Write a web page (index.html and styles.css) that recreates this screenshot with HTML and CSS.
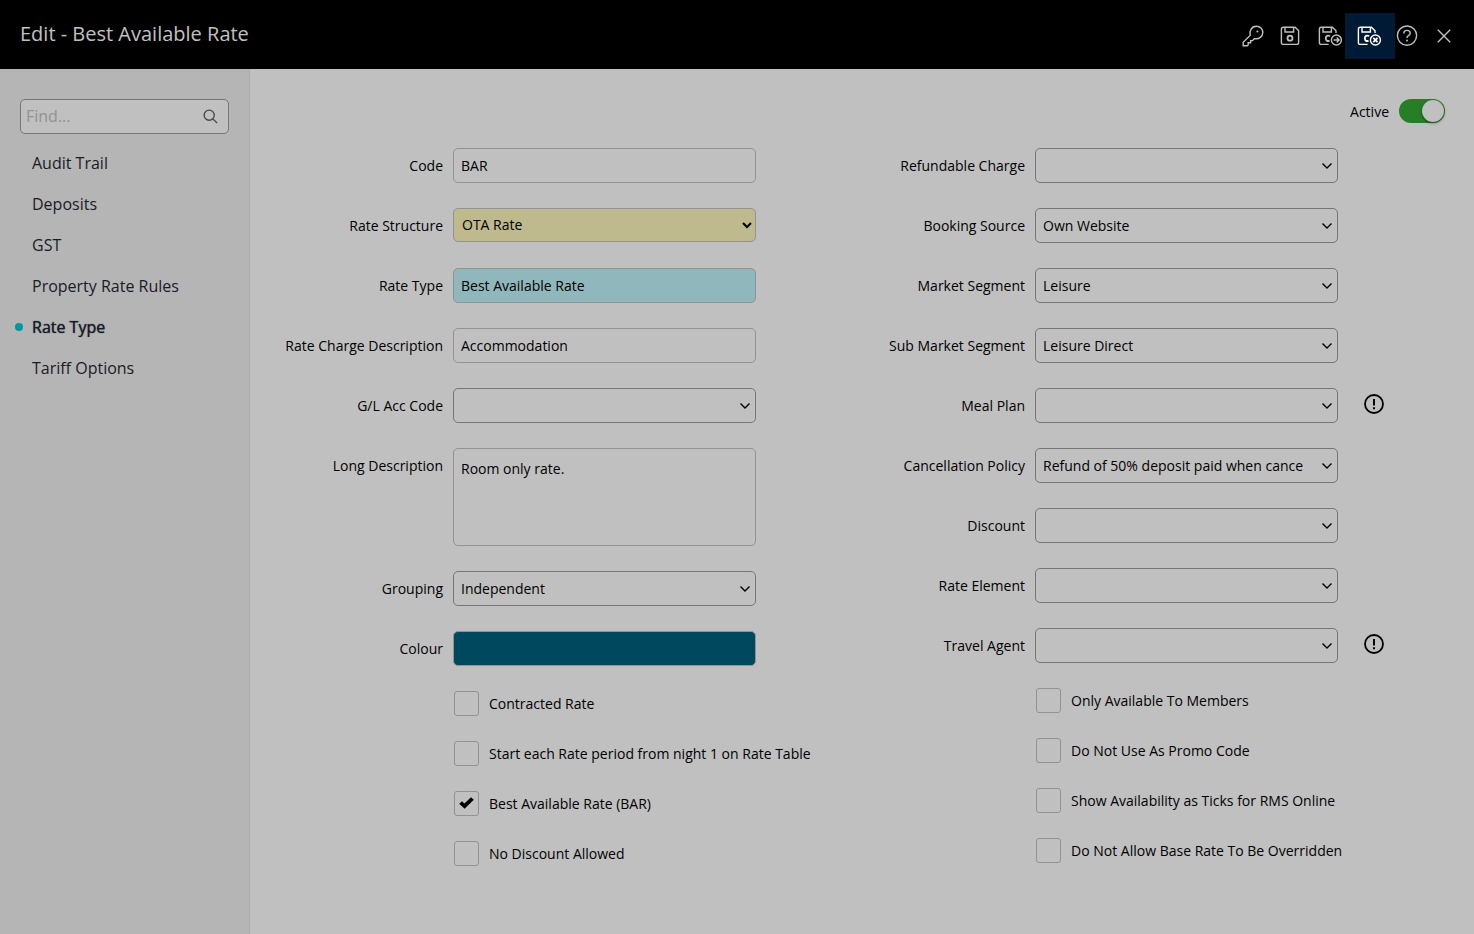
FILE: index.html
```
<!DOCTYPE html>
<html lang="en">
<head>
  <meta charset="UTF-8">
  <meta name="viewport" content="width=device-width, initial-scale=1.0">
  <title>Edit - Best Available Rate</title>
  <link rel="stylesheet" href="styles.css">
</head>
<body>

  <!-- shared icons -->
  <svg class="sprite" aria-hidden="true">
    <symbol id="chevron" viewBox="0 0 12 8">
      <path d="M1.5 1.5 L6 6 L10.5 1.5" fill="none" stroke="currentColor" stroke-width="1.4"/>
    </symbol>
    <symbol id="alert" viewBox="0 0 20 20">
      <circle cx="10" cy="10" r="9" fill="none" stroke="currentColor" stroke-width="1.8"/>
      <path d="M10 5 V11.5 M10 13.2 V15.2" fill="none" stroke="currentColor" stroke-width="2"/>
    </symbol>
    <symbol id="tick" viewBox="0 0 15 12">
      <path d="M0.2 6.8 L3 4.2 L5.4 6.4 L12 0.2 L14.8 2.8 L5.6 11.8 Z" fill="currentColor"/>
    </symbol>
  </svg>

  <header class="topbar">
    <h1>Edit - Best Available Rate</h1>
    <div class="actions">
      <button type="button" class="narrow" aria-label="Security">
        <svg width="22" height="22" viewBox="0 0 22 22">
          <path d="M8.2 10.4 C6.8 6.2 9.6 1.3 14.4 1.3 C18 1.3 20.8 4 20.8 7.5 C20.8 11.5 17 14.6 12.4 13.6 L10.6 15.6 H8.6 V17.8 H6.2 V20 L5.2 20.8 H1.2 V17.2 Z"/>
          <circle cx="15.4" cy="6.6" r="1" class="solid"/>
        </svg>
      </button>
      <button type="button" class="wide" aria-label="Save">
        <svg width="22" height="22" viewBox="0 0 22 22">
          <path d="M4.4 2.2 H16 L19.6 5.6 V17.4 Q19.6 19.4 17.6 19.4 H4.4 Q2.4 19.4 2.4 17.4 V4.2 Q2.4 2.2 4.4 2.2 Z"/>
          <path d="M6 2.4 V7 H14.6 V2.4"/>
          <circle cx="11" cy="13.2" r="2.5" class="thick"/>
        </svg>
      </button>
      <button type="button" class="medium" aria-label="Save and continue">
        <svg width="26" height="22" viewBox="0 0 26 22">
          <path d="M11.6 19.4 H4.4 Q2.4 19.4 2.4 17.4 V4.2 Q2.4 2.2 4.4 2.2 H15.4 L19 5.8 V8"/>
          <path d="M6 2.4 V7 H14.4 V2.4"/>
          <path d="M13.2 11 Q9 9.6 8.8 13.2 Q9 16.8 12.6 15.8" class="thick"/>
          <circle cx="19.4" cy="15" r="5"/>
          <path d="M16.6 15 H22 M19.7 12.6 L22.1 15 L19.7 17.4"/>
        </svg>
      </button>
      <button type="button" class="wide current" aria-label="Save and exit">
        <svg width="26" height="22" viewBox="1 0 26 22">
          <path d="M11.6 19.4 H4.4 Q2.4 19.4 2.4 17.4 V4.2 Q2.4 2.2 4.4 2.2 H15.4 L19 5.8 V8"/>
          <path d="M6 2.4 V7 H14.4 V2.4"/>
          <path d="M13.2 11 Q9 9.6 8.8 13.2 Q9 16.8 12.6 15.8" class="thick"/>
          <circle cx="19.4" cy="15" r="5"/>
          <path d="M17.3 12.9 L21.5 17.1 M21.5 12.9 L17.3 17.1" class="thick"/>
        </svg>
      </button>
      <button type="button" class="narrow" aria-label="Help">
        <svg width="22" height="22" viewBox="0 0 22 22">
          <circle cx="11" cy="10.6" r="9.6"/>
          <path d="M7.8 8.4 Q7.9 5.4 11 5.4 Q14.2 5.4 14.2 8.2 Q14.2 9.6 12.4 10.6 Q11 11.4 11 13"/>
          <circle cx="11" cy="15.4" r="1" class="solid"/>
        </svg>
      </button>
      <button type="button" class="wide" aria-label="Close">
        <svg width="14" height="14" viewBox="0 0 14 14">
          <path d="M0.8 0.8 L13.2 13.2 M13.2 0.8 L0.8 13.2"/>
        </svg>
      </button>
    </div>
  </header>

  <div class="page">
    <aside class="sidebar">
      <div class="search">
        <input type="text" placeholder="Find..." aria-label="Find">
        <svg width="15" height="15" viewBox="0 0 16 16">
          <circle cx="6.6" cy="6.6" r="5.4"/>
          <path d="M10.5 10.5 L15 15"/>
        </svg>
      </div>
      <nav>
        <a href="#">Audit Trail</a>
        <a href="#">Deposits</a>
        <a href="#">GST</a>
        <a href="#">Property Rate Rules</a>
        <a href="#" class="selected">Rate Type</a>
        <a href="#">Tariff Options</a>
      </nav>
    </aside>

    <main>
      <div class="active-row">
        <label for="active">Active</label>
        <input type="checkbox" id="active" class="toggle" checked>
      </div>

      <form class="columns">
        <div class="column">
          <div class="row">
            <label for="code">Code</label>
            <input type="text" id="code" value="BAR">
          </div>
          <div class="row">
            <label for="structure">Rate Structure</label>
            <select id="structure" class="structure"><option>OTA Rate</option></select>
          </div>
          <div class="row">
            <label for="rateType">Rate Type</label>
            <input type="text" id="rateType" class="required" value="Best Available Rate">
          </div>
          <div class="row">
            <label for="charge">Rate Charge Description</label>
            <input type="text" id="charge" value="Accommodation">
          </div>
          <div class="row">
            <label for="glCode">G/L Acc Code</label>
            <div class="dropdown">
              <select id="glCode"><option></option></select>
              <svg><use href="#chevron"/></svg>
            </div>
          </div>
          <div class="row">
            <label for="longDesc">Long Description</label>
            <textarea id="longDesc">Room only rate.</textarea>
          </div>
          <div class="row">
            <label for="grouping">Grouping</label>
            <div class="dropdown">
              <select id="grouping"><option>Independent</option></select>
              <svg><use href="#chevron"/></svg>
            </div>
          </div>
          <div class="row">
            <label for="colour">Colour</label>
            <button type="button" id="colour" class="swatch"></button>
          </div>
          <div class="check">
            <input type="checkbox" id="contracted">
            <label for="contracted">Contracted Rate</label>
          </div>
          <div class="check">
            <input type="checkbox" id="night">
            <label for="night">Start each Rate period from night 1 on Rate Table</label>
          </div>
          <div class="check">
            <input type="checkbox" id="bar" checked>
            <svg><use href="#tick"/></svg>
            <label for="bar">Best Available Rate (BAR)</label>
          </div>
          <div class="check">
            <input type="checkbox" id="noDiscount">
            <label for="noDiscount">No Discount Allowed</label>
          </div>
        </div>

        <div class="column">
          <div class="row">
            <label for="refundable">Refundable Charge</label>
            <div class="dropdown">
              <select id="refundable"><option></option></select>
              <svg><use href="#chevron"/></svg>
            </div>
          </div>
          <div class="row">
            <label for="source">Booking Source</label>
            <div class="dropdown">
              <select id="source"><option>Own Website</option></select>
              <svg><use href="#chevron"/></svg>
            </div>
          </div>
          <div class="row">
            <label for="segment">Market Segment</label>
            <div class="dropdown">
              <select id="segment"><option>Leisure</option></select>
              <svg><use href="#chevron"/></svg>
            </div>
          </div>
          <div class="row">
            <label for="subSegment">Sub Market Segment</label>
            <div class="dropdown">
              <select id="subSegment"><option>Leisure Direct</option></select>
              <svg><use href="#chevron"/></svg>
            </div>
          </div>
          <div class="row">
            <label for="meal">Meal Plan</label>
            <div class="dropdown">
              <select id="meal"><option></option></select>
              <svg><use href="#chevron"/></svg>
            </div>
            <svg class="alert"><use href="#alert"/></svg>
          </div>
          <div class="row">
            <label for="policy">Cancellation Policy</label>
            <div class="dropdown">
              <select id="policy"><option>Refund of 50% deposit paid when cance</option></select>
              <svg><use href="#chevron"/></svg>
            </div>
          </div>
          <div class="row">
            <label for="discount">Discount</label>
            <div class="dropdown">
              <select id="discount"><option></option></select>
              <svg><use href="#chevron"/></svg>
            </div>
          </div>
          <div class="row">
            <label for="element">Rate Element</label>
            <div class="dropdown">
              <select id="element"><option></option></select>
              <svg><use href="#chevron"/></svg>
            </div>
          </div>
          <div class="row">
            <label for="agent">Travel Agent</label>
            <div class="dropdown">
              <select id="agent"><option></option></select>
              <svg><use href="#chevron"/></svg>
            </div>
            <svg class="alert"><use href="#alert"/></svg>
          </div>
          <div class="check">
            <input type="checkbox" id="members">
            <label for="members">Only Available To Members</label>
          </div>
          <div class="check">
            <input type="checkbox" id="promo">
            <label for="promo">Do Not Use As Promo Code</label>
          </div>
          <div class="check">
            <input type="checkbox" id="ticks">
            <label for="ticks">Show Availability as Ticks for RMS Online</label>
          </div>
          <div class="check">
            <input type="checkbox" id="override">
            <label for="override">Do Not Allow Base Rate To Be Overridden</label>
          </div>
        </div>
      </form>
    </main>
  </div>

</body>
</html>
```
FILE: styles.css
```
* {
  box-sizing: border-box;
}

body {
  margin: 0;
  min-height: 100vh;
  display: flex;
  flex-direction: column;
  font-family: "Open Sans", sans-serif;
  font-size: 14px;
  color: #000;
  background-color: #c0c0c0;
}

input, select, textarea, button {
  margin: 0;
  font-family: inherit;
  font-size: 14px;
  color: #000;
}

.sprite {
  position: absolute;
  width: 0;
  height: 0;
}

/* Top bar */
.topbar {
  display: flex;
  justify-content: space-between;
  align-items: center;
  height: 69px;
  padding: 0 5px 0 20px;
  background-color: #000;
}

.topbar h1 {
  margin: 0;
  padding-bottom: 2px;
  font-size: 20px;
  line-height: 28px;
  font-weight: 400;
  color: #c0c0c0;
}

.actions {
  display: flex;
  padding-top: 3px;
}

.actions button {
  display: flex;
  align-items: center;
  justify-content: center;
  height: 46px;
  padding: 0;
  border: none;
  background: none;
  color: #c0c0c0;
  cursor: pointer;
}

.actions .narrow { width: 24px; }
.actions .medium { width: 30px; }
.actions .wide { width: 50px; }

.actions .current {
  background-color: #001a35;
  color: #fff;
}

.actions svg {
  flex: none;
  fill: none;
  stroke: currentColor;
  stroke-width: 1.4;
}

.actions .thick { stroke-width: 1.8; }

.actions .solid {
  fill: currentColor;
  stroke: none;
}

.page {
  display: flex;
  flex: 1;
}

/* Sidebar */
.sidebar {
  width: 250px;
  flex: none;
  padding: 30px 20px;
  background-color: #b5b5b5;
  border-right: 1px solid #acacac;
}

.search {
  position: relative;
}

.search input {
  display: block;
  width: 100%;
  height: 35px;
  padding: 0 36px 2px 5px;
  font-size: 16px;
  background-color: #c0c0c0;
  border: 1px solid #767676;
  border-radius: 5px;
}

.search input::placeholder {
  color: #929292;
}

.search svg {
  position: absolute;
  right: 11px;
  top: 10px;
  fill: none;
  stroke: #444;
  stroke-width: 1.4;
}

nav {
  margin-top: 9px;
}

nav a {
  position: relative;
  display: block;
  padding-left: 12px;
  font-size: 16px;
  line-height: 41px;
  color: #191b26;
  text-decoration: none;
}

nav .selected {
  text-shadow: 0 0 1px #191b26;
}

nav .selected::before {
  content: "";
  position: absolute;
  left: -5px;
  top: 16px;
  width: 8px;
  height: 8px;
  border-radius: 50%;
  background-color: #00979e;
}

/* Form */
main {
  flex: 1;
  min-width: 0;
  padding: 30px 0;
}

.active-row {
  display: flex;
  justify-content: flex-end;
  align-items: center;
  gap: 10px;
  height: 24px;
  margin: 0 29px 25px 0;
}

.toggle {
  appearance: none;
  position: relative;
  width: 46px;
  height: 24px;
  border-radius: 12px;
  background-color: #258025;
}

.toggle::before {
  content: "";
  position: absolute;
  right: 1px;
  top: 1px;
  width: 22px;
  height: 22px;
  border-radius: 50%;
  background-color: #c0c0c0;
  box-shadow: 0 1px 3px rgba(0, 0, 0, 0.5);
}

.columns {
  display: grid;
  grid-template-columns: 1fr 1fr;
  padding-right: 60px;
}

.column {
  display: flex;
  flex-direction: column;
  gap: 25px;
  min-width: 0;
}

.row {
  display: grid;
  grid-template-columns: 193px minmax(0, 1fr) 66px;
  column-gap: 10px;
  min-height: 35px;
  align-items: start;
}

.row label {
  line-height: 35px;
  text-align: right;
}

.row input,
.row select,
.row textarea,
.swatch {
  display: block;
  width: 100%;
  height: 35px;
  padding: 0 7px;
  background-color: #c0c0c0;
  border: 1px solid #929292;
  border-radius: 5px;
}

.row textarea {
  height: 98px;
  padding: 10px 7px;
  line-height: 20px;
  resize: none;
}

.row .required {
  background-color: #90b8bc;
}

.row .structure {
  height: 34px;
  padding: 0 4px 1px;
  background-color: #bfb98e;
}

.row .swatch {
  background-color: #00485e;
}

.dropdown {
  position: relative;
}

.dropdown select {
  appearance: none;
  padding-right: 26px;
  border-color: #767676;
}

.dropdown svg {
  position: absolute;
  right: 5px;
  top: 14px;
  width: 12px;
  height: 8px;
  pointer-events: none;
}

.alert {
  width: 20px;
  height: 20px;
  margin: 6px 0 0 16px;
}

.check {
  position: relative;
  display: flex;
  align-items: center;
  gap: 10px;
  padding-left: 204px;
}

.check input {
  appearance: none;
  flex: none;
  width: 25px;
  height: 25px;
  border: 1px solid #929292;
  border-radius: 3px;
}

.check label {
  line-height: 25px;
  white-space: nowrap;
}

/* tick only shows while the box is checked */
.check svg {
  display: none;
  position: absolute;
  left: 209px;
  top: 6px;
  width: 15px;
  height: 12px;
  pointer-events: none;
}

.check input:checked + svg {
  display: block;
}
```
